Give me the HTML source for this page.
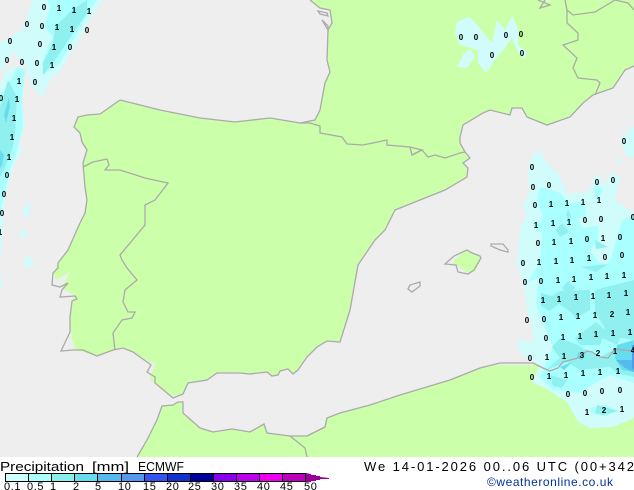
<!DOCTYPE html>
<html><head><meta charset="utf-8">
<style>
html,body{margin:0;padding:0;background:#fff;width:634px;height:490px;overflow:hidden}
svg{display:block}
text{font-family:"Liberation Sans",sans-serif}
.n text{font-size:8px;font-weight:bold;text-anchor:middle;fill:#000}
.l text{font-size:11px;fill:#000;letter-spacing:.6px}
</style></head><body>
<svg width="634" height="490" viewBox="0 0 634 490" xmlns="http://www.w3.org/2000/svg">
<rect width="634" height="490" fill="#fff"/>
<rect width="634" height="457" fill="#eeeeee"/>
<g fill="#ccffaa">
<path d="M120,100 110,107 100,114 87,115 78,117 74,127 80,133 82,142 87,150 83,163 85,187 87,200 85,213 80,223 68,250 58,263 53,273 56,280 70,272 62,288 75,296 72,301 70,317 72,340 76,350 97,356 113,350 123,348 133,352 150,362 155,363 150,380 155,383 167,393 173,396 183,394 188,383 207,380 217,373 240,372 250,374 267,372 272,376 278,375 280,371 288,369 293,374 298,370 307,357 317,347 327,341 340,342 350,310 355,282 358,265 375,240 385,230 395,210 420,200 445,190 467,177 468,168 463,163 470,158 465,152 460,143 460,137 463,125 483,113 490,110 510,115 512,108 522,108 527,117 547,126 570,117 583,103 593,95 613,88 625,70 634,66 634,0 310,0 320,8 330,10 332,23 328,30 327,60 330,72 325,83 320,110 315,120 300,123 270,118 235,122 200,118 160,110Z"/>
<path d="M137,457 147,440 157,420 162,406 173,405 178,402 183,402 183,413 200,428 213,432 232,429 250,432 264,424 267,433 290,436 307,436 325,427 327,418 340,413 370,405 400,395 450,380 480,368 500,365 528,365 634,365 634,457Z"/>
<path d="M452,263 462,253 468,250 480,256 481,258 475,272 468,273 458,266Z"/>
</g>
<!-- precipitation -->
<g fill="#d0fcfc">
<path d="M468,17 473,20 492,43 497,20 505,30 512,16 518,28 518,45 527,52 524,59 517,50 512,38 503,50 497,57 486,73 478,63 478,50 460,45 455,33 457,22Z"/>
<path d="M470,49 475,57 467,68 457,67 463,55Z"/>
<path d="M634,125 620,140 628,158 634,157Z"/><path d="M619,158 622,160 619,163 617,160Z"/>
<path d="M539,150 550,167 558,173 567,193 587,193 597,173 604,185 612,173 620,177 615,200 634,213 634,418 613,427 590,428 578,422 567,402 543,387 532,382 540,365 520,353 517,340 533,342 533,330 527,310 525,290 517,263 520,227 527,215 523,205 530,190 528,173 532,155Z"/>
<path d="M33,0 103,0 90,20 60,72 50,80 42,97 33,87 26,68 14,52 0,72 0,43 22,30Z"/>
<path d="M17,66 25,70 22,100 25,127 17,143 23,150 13,167 5,200 2,243 0,260 0,85 6,70Z"/>
<path d="M0,277 3,283 0,290Z"/>
<path d="M27,203 31,207 27,218 23,215 24,207Z"/><path d="M23,229 28,234 23,239 19,234Z"/><path d="M29,254 34,263 28,269 23,263Z"/>
<path d="M546,0 550,0 548,2Z"/><path d="M595,0 603,0 600,1Z"/>
</g>
<g fill="#aaffff">
<path d="M48,0 97,0 87,15 60,63 43,75 42,63 47,50 53,37 45,27 50,7Z"/>
<path d="M17,67 25,70 22,100 23,127 17,150 10,170 3,200 0,215 0,95 8,85Z"/>
<path d="M540,187 560,193 568,203 585,202 586,218 577,218 582,228 598,226 598,240 590,250 598,262 607,265 612,255 622,220 634,215 634,383 610,375 600,380 580,393 553,390 540,377 543,370 553,347 543,323 537,307 537,290 540,277 528,282 540,262 542,233 537,230 543,217 537,200Z"/>
<path d="M590,408 604,405 620,411 604,416 592,414Z"/>
<path d="M533,222 542,222 537,232Z"/>
<path d="M597,185 603,190 597,202 593,190Z"/>
</g>
<g fill="#90f0f0">
<path d="M72,10 87,0 87,13 57,57 43,75 43,63 53,43 55,27Z"/>
<path d="M8,80 17,97 15,133 12,150 5,167 0,177 0,107Z"/>
<path d="M562,223 569,232 560,237 556,230Z"/>
<path d="M568,209 571,215 569,222 566,215Z"/>
<path d="M568,281 575,288 568,295 562,288Z"/>
<path d="M541,293 552,296 560,291 590,290 588,302 573,314 559,304 549,311 541,306Z"/>
<path d="M595,290 634,280 634,340 620,338 617,345 600,337 605,328 595,312Z"/>
<path d="M570,293 590,290 590,310 575,318 568,305Z"/>
<path d="M546,370 567,362 580,370 610,367 617,373 634,377 634,357 615,349 600,357 587,351 578,345 560,338 552,347 560,358Z"/>
<path d="M550,375 567,380 562,388 553,386Z"/>
<path d="M597,405 618,411 604,415 595,413Z"/>
<path d="M575,338 596,322 605,330 600,345 580,345Z"/>
<path d="M595,240 608,247 596,249Z"/>
<path d="M581,267 608,264 596,272Z"/>
</g>
<g fill="#66ddee">
<path d="M9,97 10,107 6,123 4,115Z"/>
<path d="M0,150 4,155 2,165 0,168Z"/>
<path d="M617,345 634,340 634,372 622,370 615,358Z"/>
<path d="M560,367 572,362 564,370Z"/>
<path d="M578,352 585,355 582,360 577,358Z"/>
</g>
<path d="M616,360 634,360 634,372 625,368Z" fill="#55bbee"/>
<path d="M632,345 634,345 634,370 632,368Z" fill="#5599ee"/>
<!-- coast lines -->
<g fill="none" stroke="#aaaaaa" stroke-width="1.3">
<path d="M120,100 110,107 100,114 87,115 78,117 74,127 80,133 82,142 87,150 83,163 85,187 87,200 85,213 80,223 68,250 58,263 58,268 53,273 52,285 60,287 68,283 62,290 60,297 75,296 77,299 72,301 70,317 70,332 61,351 73,350 83,350 97,356 113,350 123,348 133,352 147,362 151,365 147,372 155,377 155,383 167,393 173,398 183,394 188,383 207,380 217,373 240,373 250,374 267,372 272,376 278,375 280,371 288,369 293,374 298,370 307,357 317,347 327,341 340,342 350,310 355,282 358,265 375,240 385,230 395,210 420,200 445,190 467,177 468,168 463,163 470,158 465,152 460,143 460,137 463,125 483,113 490,110 510,115 512,108 522,108 527,117 547,125 570,117 583,103 593,95 613,88 625,70 634,66"/>
<path d="M310,0 320,8 330,10 332,23 328,30 327,60 330,72 325,83 320,110 315,120 300,123 270,118 235,122 200,118 160,110 120,100"/>
<path d="M300,123 310,123 320,126 320,133 342,137 347,144 363,145 387,140 387,145 410,147 412,155 422,150 428,157 435,155 445,158 460,153 465,152"/>
<path d="M410,147 422,150 412,155"/>
<path d="M83,167 93,162 107,159 109,165 105,170 120,170 145,178 168,183 155,200 145,205 145,225 120,255 122,260 127,268 137,280 125,290 123,302 128,312 135,312 132,318 122,320 113,333 115,350"/>
<path d="M137,457 147,440 157,420 162,406 173,405 178,402 183,402 183,413 200,428 213,432 232,429 250,432 264,424 267,433 290,436 307,436 325,427 327,418 340,413 370,405 400,395 450,380 480,368 500,363 533,363 543,368 550,371 558,368 563,362 578,358 587,351 592,352 600,357 608,358 615,349 632,351"/>
<path d="M290,436 305,448 307,457"/>
<path d="M565,0 567,10 573,15 595,12 615,0 628,3 634,10"/>
<path d="M567,18 567,23 578,33 578,40 563,45 577,58 573,68 578,78 597,80 600,83 595,95"/>
<path d="M567,10 567,18"/>
<path d="M538,0 550,5 540,8 545,0"/>
<path d="M318,11 327,13 328,16 320,14Z"/>
<path d="M322,20 328,26 328,30Z"/>
<path d="M445,264 454,256 467,250 472,253 480,256 481,258 474,270 468,274 458,272 456,265Z"/>
<path d="M491,244 503,244 508,250 508,252 500,250 491,246Z"/>
<path d="M408,289 410,285 420,282 420,286 412,292Z"/>
</g>
<g class="n">
<text x="461" y="40">0</text><text x="476" y="40">0</text><text x="492" y="58">0</text><text x="506" y="38">0</text><text x="521" y="37">0</text><text x="522" y="56">0</text>
<text x="44" y="10">0</text><text x="59" y="11">1</text><text x="74" y="13">1</text><text x="89" y="14">1</text><text x="27" y="27">0</text><text x="42" y="29">0</text><text x="57" y="30">1</text><text x="72" y="32">1</text><text x="87" y="33">0</text><text x="10" y="44">0</text><text x="40" y="47">0</text><text x="54" y="50">1</text><text x="70" y="50">0</text><text x="7" y="63">0</text><text x="22" y="65">0</text><text x="37" y="66">0</text><text x="52" y="68">1</text><text x="19" y="84">1</text><text x="35" y="85">0</text><text x="1" y="101">0</text><text x="17" y="102">1</text><text x="14" y="121">1</text><text x="12" y="140">1</text><text x="9" y="160">1</text><text x="7" y="178">0</text><text x="4" y="197">0</text><text x="2" y="216">0</text><text x="0" y="235">1</text>
<text x="532" y="170">0</text><text x="533" y="190">0</text><text x="549" y="188">0</text><text x="535" y="208">0</text><text x="551" y="207">1</text><text x="567" y="206">1</text><text x="583" y="205">1</text><text x="599" y="203">1</text><text x="597" y="185">0</text><text x="613" y="183">0</text><text x="624" y="144">0</text><text x="633" y="220">0</text>
<text x="536" y="228">1</text><text x="553" y="226">1</text><text x="569" y="225">1</text><text x="585" y="223">0</text><text x="601" y="222">0</text>
<text x="538" y="246">0</text><text x="554" y="245">1</text><text x="571" y="244">1</text><text x="587" y="242">0</text><text x="603" y="241">1</text><text x="620" y="240">0</text>
<text x="523" y="266">0</text><text x="539" y="265">1</text><text x="556" y="264">1</text><text x="572" y="263">1</text><text x="589" y="261">1</text><text x="605" y="260">0</text><text x="622" y="258">0</text>
<text x="525" y="285">0</text><text x="541" y="284">0</text><text x="558" y="283">1</text><text x="574" y="282">1</text><text x="591" y="280">1</text><text x="607" y="279">1</text><text x="624" y="278">1</text>
<text x="543" y="303">1</text><text x="559" y="302">1</text><text x="576" y="300">1</text><text x="593" y="299">1</text><text x="609" y="298">1</text><text x="626" y="296">1</text>
<text x="527" y="323">0</text><text x="544" y="322">0</text><text x="561" y="320">1</text><text x="578" y="319">1</text><text x="595" y="318">1</text><text x="612" y="317">2</text><text x="628" y="315">1</text>
<text x="546" y="341">0</text><text x="563" y="340">1</text><text x="580" y="339">1</text><text x="596" y="337">1</text><text x="613" y="336">1</text><text x="630" y="335">1</text>
<text x="530" y="361">0</text><text x="547" y="360">1</text><text x="564" y="359">1</text><text x="582" y="358">3</text><text x="598" y="356">2</text><text x="615" y="354">1</text><text x="633" y="353">4</text>
<text x="532" y="380">0</text><text x="549" y="379">1</text><text x="566" y="378">1</text><text x="583" y="376">1</text><text x="600" y="375">1</text><text x="618" y="374">1</text>
<text x="568" y="397">0</text><text x="585" y="396">0</text><text x="602" y="394">0</text><text x="620" y="393">0</text>
<text x="587" y="415">1</text><text x="604" y="413">2</text><text x="622" y="412">1</text>
</g>
<!-- footer -->
<text x="0" y="471" font-size="13" textLength="84" lengthAdjust="spacingAndGlyphs">Precipitation</text>
<text x="92" y="471" font-size="13" textLength="37" lengthAdjust="spacingAndGlyphs">[mm]</text>
<text x="138" y="471" font-size="13" textLength="46" lengthAdjust="spacingAndGlyphs">ECMWF</text>
<g stroke="#000" stroke-width="1" shape-rendering="crispEdges">
<rect x="5.5" y="473.5" width="23" height="8" fill="#ccffff"/>
<rect x="28.5" y="473.5" width="23" height="8" fill="#aaffff"/>
<rect x="51.5" y="473.5" width="23" height="8" fill="#88eeee"/>
<rect x="74.5" y="473.5" width="23" height="8" fill="#66ddee"/>
<rect x="97.5" y="473.5" width="24" height="8" fill="#55bbee"/>
<rect x="121.5" y="473.5" width="23" height="8" fill="#5599ee"/>
<rect x="144.5" y="473.5" width="23" height="8" fill="#3355ee"/>
<rect x="167.5" y="473.5" width="23" height="8" fill="#1133cc"/>
<rect x="190.5" y="473.5" width="23" height="8" fill="#000099"/>
<rect x="213.5" y="473.5" width="23" height="8" fill="#8800ee"/>
<rect x="236.5" y="473.5" width="23" height="8" fill="#bb00ee"/>
<rect x="259.5" y="473.5" width="23" height="8" fill="#ee00ee"/>
<rect x="282.5" y="473.5" width="23" height="8" fill="#bb00bb"/>
</g>
<path d="M306,473 311,474 311,475 316,475 316,476 320,476 320,477 329,478 329,479 320,479 320,480 316,480 316,481 311,481 311,482 306,482Z" fill="#990099"/>
<g class="l">
<text x="4" y="490">0.1</text><text x="27" y="490">0.5</text><text x="50" y="490">1</text><text x="73" y="490">2</text><text x="95" y="490">5</text><text x="118" y="490">10</text><text x="143" y="490">15</text><text x="166" y="490">20</text><text x="188" y="490">25</text><text x="211" y="490">30</text><text x="234" y="490">35</text><text x="257" y="490">40</text><text x="280" y="490">45</text><text x="304" y="490">50</text>
</g>
<text x="364" y="471" font-size="13" textLength="270" lengthAdjust="spacing">We 14-01-2026 00..06 UTC (00+342</text>
<text x="487" y="486" font-size="12" fill="#003399" textLength="126" lengthAdjust="spacing">©weatheronline.co.uk</text>
</svg>
</body></html>
